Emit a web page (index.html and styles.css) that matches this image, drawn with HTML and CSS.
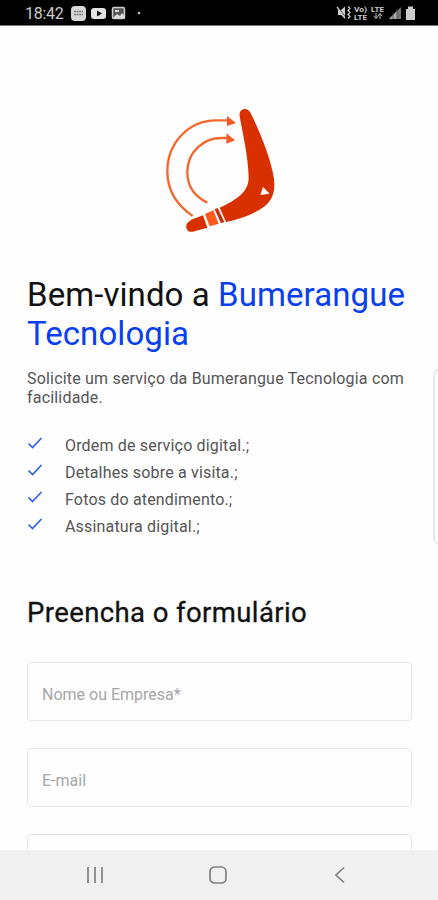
FILE: index.html
```html
<!DOCTYPE html>
<html lang="pt-BR">
<head>
  <meta charset="UTF-8" />
  <meta name="viewport" content="width=device-width, initial-scale=1.0"/>
  <title>Bumerangue Tecnologia</title>
  <link rel="stylesheet" href="styles.css">
</head>
<body>

<div class="status-bar">
  <span class="clock">18:42</span>
  <svg class="notifications" width="80" height="26" viewBox="0 0 80 26">
    <rect x="1" y="6" width="15" height="15" rx="4" fill="#d8d8d8"/>
    <path d="M4 11.5h9M4 14.5h9" stroke="#777" stroke-width="1.6" stroke-dasharray="2 .6"/>
    <rect x="21" y="8" width="15" height="11" rx="3" fill="#e2e2e2"/>
    <path d="M27 10.5v6l5-3z" fill="#111"/>
    <rect x="42.5" y="7.5" width="12" height="11" rx="1.5" fill="#555" stroke="#d0d0d0" stroke-width="1.5"/>
    <path d="M43 18l4-4 3 2 2-3 3 3v2z" fill="#ddd"/>
    <path d="M45 10h4v2h-4z" fill="#ddd"/>
    <circle cx="69" cy="13" r="1.3" fill="#bbb"/>
  </svg>
  <svg class="system" width="82" height="26" viewBox="0 0 82 26">
    <path d="M2 10h3l4-3.5v12L5 15H2z" fill="#ccc"/>
    <path d="M1 6l9 12" stroke="#000" stroke-width="1"/>
    <path d="M1 7l8 11M12 6.500l2 2-2 2 2 2-2 2 2 2-2 2" fill="none" stroke="#ccc" stroke-width="1.3"/>
    <g class="signal-label">
      <text x="18" y="12" textLength="13" lengthAdjust="spacingAndGlyphs">Vo)</text>
      <text x="18" y="19.500" textLength="13" lengthAdjust="spacingAndGlyphs">LTE</text>
      <text x="35" y="12" textLength="13" lengthAdjust="spacingAndGlyphs">LTE</text>
    </g>
    <path d="M40 13v5M38 16l2 2.500 2-2.500M44 19v-5M42 16l2-2.500 2 2.500" fill="none" stroke="#bbb" stroke-width="1"/>
    <path d="M53 19L65 7v12z" fill="#777"/>
    <path d="M53 19l8-8v8z" fill="#aaa"/>
    <path d="M57 12v7M61 9v10" stroke="#444" stroke-width=".7"/>
    <path d="M70 9h2V6.500h5V9h2v11h-9z" fill="#ccc"/>
  </svg>
</div>

<main class="page">
  <svg class="logo" width="150" height="150" viewBox="0 0 450 450">
    <g fill="none" stroke="#f4672d" stroke-width="7">
      <path d="M143 363C93 329 67 283 67 229C67 142 133 76 213 76H248"/>
      <path d="M187 323C148 304 127 273 127 231C127 172 174 129 229 129H245"/>
    </g>
    <path d="M246 63l27 21-27 9zM244 115l26 21-26 10z" fill="#f15a22"/>
    <path d="M284 64C280 38 310 34 318 56C344 111 370 172 384 234C392 272 390 310 359 334C324 359 283 373 243 381L224 338C266 318 311 294 311 248C310 184 292 112 284 64z" fill="#d93000"/>
    <path d="M174 361L187 398L143 410C129 413 122 403 124 390C128 377 153 368 174 361z" fill="#d93000"/>
    <path d="M180 357l25-11 16 40-27 8z" fill="#ff5a1c"/>
    <path d="M209 343l9-4 20 42-10 4z" fill="#c32c10"/>
    <path d="M354 276l20 20-28 4z" fill="#fff"/>
  </svg>

  <h1>Bem-vindo a <span class="brand">Bumerangue Tecnologia</span></h1>
  <p class="intro">Solicite um serviço da Bumerangue Tecnologia com facilidade.</p>

  <ul class="features">
    <li><svg width="16" height="14" viewBox="0 0 16 14"><path d="M1.500 7.500l4 4L14.500 2"/></svg><span>Ordem de serviço digital.;</span></li>
    <li><svg width="16" height="14" viewBox="0 0 16 14"><path d="M1.500 7.500l4 4L14.500 2"/></svg><span>Detalhes sobre a visita.;</span></li>
    <li><svg width="16" height="14" viewBox="0 0 16 14"><path d="M1.500 7.500l4 4L14.500 2"/></svg><span>Fotos do atendimento.;</span></li>
    <li><svg width="16" height="14" viewBox="0 0 16 14"><path d="M1.500 7.500l4 4L14.500 2"/></svg><span>Assinatura digital.;</span></li>
  </ul>

  <h2>Preencha o formulário</h2>
  <form class="form">
    <input type="text" placeholder="Nome ou Empresa*">
    <input type="email" placeholder="E-mail">
    <input type="text">
  </form>

  <div class="edge-panel"></div>
</main>

<div class="nav-bar">
  <svg width="18" height="18" viewBox="0 0 18 18"><path d="M2 1v16M9 1v16M16 1v16"/></svg>
  <svg width="18" height="18" viewBox="0 0 18 18"><rect x="1" y="1" width="16" height="16" rx="4.500"/></svg>
  <svg width="18" height="18" viewBox="0 0 18 18"><path d="M13 1.500L5 9l8 7.500"/></svg>
</div>

</body>
</html>
```
FILE: styles.css
```css
* {
  box-sizing: border-box;
}
body {
  font-family: Roboto, sans-serif;
  margin: 0;
  height: 900px;
  display: flex;
  flex-direction: column;
  overflow: hidden;
  background: #fefefe;
}
.status-bar {
  flex: none;
  height: 26px;
  display: flex;
  align-items: center;
  padding: 0 20px 0 25px;
  background: #000;
  border-bottom: 1px solid #777;
  color: #ccc;
}
.clock {
  width: 45px;
  font-size: 16px;
  letter-spacing: -0.3px;
  padding-top: 2px;
}
.system {
  margin-left: auto;
}
.signal-label {
  fill: #ccc;
  font-size: 7px;
  font-weight: 700;
}
.page {
  position: relative;
  flex: 1;
  min-height: 0;
  overflow: hidden;
  padding: 69px 26px 0 27px;
}
.logo {
  display: block;
  margin-left: 118px;
}
h1 {
  margin: 31px -10px 0 0;
  font-size: 33px;
  font-weight: 400;
  line-height: 38.5px;
  letter-spacing: 0.08px;
  color: #111;
}
.brand {
  color: #0a3ff0;
}
.intro {
  margin: 16px 0 0;
  font-size: 16px;
  line-height: 19px;
  letter-spacing: 0.19px;
  color: #555;
}
.features {
  list-style: none;
  margin: 25px 0 0;
  padding: 0;
  font-size: 16px;
  line-height: 27px;
  letter-spacing: 0.17px;
  color: #555;
}
.features li {
  display: flex;
  gap: 22px;
}
.features svg {
  margin-top: 4px;
  fill: none;
  stroke: #2f62e8;
  stroke-width: 1.7;
}
h2 {
  margin: 57px 0 0;
  font-size: 27.5px;
  font-weight: 400;
  line-height: 32px;
  letter-spacing: 0.4px;
  color: #111;
  -webkit-text-stroke: 0.3px #111;
}
.form {
  display: flex;
  flex-direction: column;
  gap: 27px;
  margin-top: 33px;
}
.form input {
  flex: none;
  width: 100%;
  height: 59px;
  padding: 6px 14px 0;
  border: 1px solid #e6e6e8;
  border-radius: 4px;
  background: #fefefe;
  font-family: inherit;
  font-size: 16px;
}
.form input::placeholder {
  color: #a6a6a6;
}
.edge-panel {
  position: absolute;
  top: 343px;
  right: -10px;
  width: 15px;
  height: 175px;
  border: 2px solid #e8e8e8;
  border-radius: 6px;
}
.nav-bar {
  flex: none;
  height: 50px;
  display: flex;
  align-items: center;
  justify-content: space-between;
  padding: 0 89px 0 86px;
  background: #f0f0f0;
}
.nav-bar svg {
  fill: none;
  stroke: #808080;
  stroke-width: 1.7;
}
```
